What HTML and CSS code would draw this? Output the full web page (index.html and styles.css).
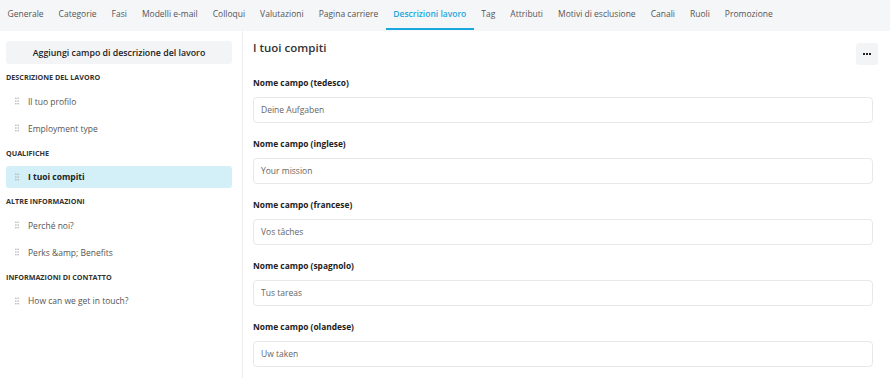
FILE: index.html
```html
<!DOCTYPE html>
<html lang="it">
<head>
<meta charset="utf-8">
<title>Descrizioni lavoro</title>
<link rel="stylesheet" href="styles.css">
</head>
<body>
<nav class="tabs">
  <a class="tab">Generale</a>
  <a class="tab">Categorie</a>
  <a class="tab">Fasi</a>
  <a class="tab">Modelli e-mail</a>
  <a class="tab">Colloqui</a>
  <a class="tab">Valutazioni</a>
  <a class="tab">Pagina carriere</a>
  <a class="tab active">Descrizioni lavoro</a>
  <a class="tab">Tag</a>
  <a class="tab">Attributi</a>
  <a class="tab">Motivi di esclusione</a>
  <a class="tab">Canali</a>
  <a class="tab">Ruoli</a>
  <a class="tab">Promozione</a>
</nav>
<div class="layout">
  <aside class="sidebar">
    <button class="add-btn">Aggiungi campo di descrizione del lavoro</button>
    <div class="group-title">DESCRIZIONE DEL LAVORO</div>
    <div class="item"><svg class="handle" viewBox="0 0 4 8" width="4" height="8"><circle cx="0.9" cy="1.2" r="0.75"/><circle cx="3.1" cy="1.2" r="0.75"/><circle cx="0.9" cy="4" r="0.75"/><circle cx="3.1" cy="4" r="0.75"/><circle cx="0.9" cy="6.8" r="0.75"/><circle cx="3.1" cy="6.8" r="0.75"/></svg>Il tuo profilo</div>
    <div class="item"><svg class="handle" viewBox="0 0 4 8" width="4" height="8"><circle cx="0.9" cy="1.2" r="0.75"/><circle cx="3.1" cy="1.2" r="0.75"/><circle cx="0.9" cy="4" r="0.75"/><circle cx="3.1" cy="4" r="0.75"/><circle cx="0.9" cy="6.8" r="0.75"/><circle cx="3.1" cy="6.8" r="0.75"/></svg>Employment type</div>
    <div class="group-title">QUALIFICHE</div>
    <div class="item selected"><svg class="handle" viewBox="0 0 4 8" width="4" height="8"><circle cx="0.9" cy="1.2" r="0.75"/><circle cx="3.1" cy="1.2" r="0.75"/><circle cx="0.9" cy="4" r="0.75"/><circle cx="3.1" cy="4" r="0.75"/><circle cx="0.9" cy="6.8" r="0.75"/><circle cx="3.1" cy="6.8" r="0.75"/></svg>I tuoi compiti</div>
    <div class="group-title">ALTRE INFORMAZIONI</div>
    <div class="item"><svg class="handle" viewBox="0 0 4 8" width="4" height="8"><circle cx="0.9" cy="1.2" r="0.75"/><circle cx="3.1" cy="1.2" r="0.75"/><circle cx="0.9" cy="4" r="0.75"/><circle cx="3.1" cy="4" r="0.75"/><circle cx="0.9" cy="6.8" r="0.75"/><circle cx="3.1" cy="6.8" r="0.75"/></svg>Perché noi?</div>
    <div class="item"><svg class="handle" viewBox="0 0 4 8" width="4" height="8"><circle cx="0.9" cy="1.2" r="0.75"/><circle cx="3.1" cy="1.2" r="0.75"/><circle cx="0.9" cy="4" r="0.75"/><circle cx="3.1" cy="4" r="0.75"/><circle cx="0.9" cy="6.8" r="0.75"/><circle cx="3.1" cy="6.8" r="0.75"/></svg>Perks &amp;amp; Benefits</div>
    <div class="group-title">INFORMAZIONI DI CONTATTO</div>
    <div class="item"><svg class="handle" viewBox="0 0 4 8" width="4" height="8"><circle cx="0.9" cy="1.2" r="0.75"/><circle cx="3.1" cy="1.2" r="0.75"/><circle cx="0.9" cy="4" r="0.75"/><circle cx="3.1" cy="4" r="0.75"/><circle cx="0.9" cy="6.8" r="0.75"/><circle cx="3.1" cy="6.8" r="0.75"/></svg>How can we get in touch?</div>
  </aside>
  <main class="main">
    <div class="head">
      <h1 class="title">I tuoi compiti</h1>
      <button class="more"><span></span><span></span><span></span></button>
    </div>
    <div class="field">
      <label class="label">Nome campo (tedesco)</label>
      <div class="input">Deine Aufgaben</div>
    </div>
    <div class="field">
      <label class="label">Nome campo (inglese)</label>
      <div class="input">Your mission</div>
    </div>
    <div class="field">
      <label class="label">Nome campo (francese)</label>
      <div class="input">Vos tâches</div>
    </div>
    <div class="field">
      <label class="label">Nome campo (spagnolo)</label>
      <div class="input">Tus tareas</div>
    </div>
    <div class="field">
      <label class="label">Nome campo (olandese)</label>
      <div class="input">Uw taken</div>
    </div>
  </main>
</div>
</body>
</html>
```

FILE: styles.css
```css
* { box-sizing: border-box; }
html, body { margin: 0; padding: 0; }
body {
  font-family: "Open Sans", "Noto Sans", sans-serif;
  color: #333;
  background: #fff;
  width: 890px;
  height: 378px;
  overflow: hidden;
}
.tabs {
  display: flex;
  align-items: flex-start;
  height: 31px;
  background: #f5f6f8;
}
.tab {
  display: block;
  height: 30px;
  padding: 0 7.5px;
  font-size: 8.5px;
  line-height: 28px;
  color: #555;
  border-bottom: 2px solid transparent;
  white-space: nowrap;
}
.tab.active {
  color: #1aa7de;
  font-weight: 600;
  border-bottom-color: #1aa7de;
}
.layout {
  display: flex;
  height: 347px;
}
.sidebar {
  width: 243px;
  flex: none;
  border-right: 1px solid #ededed;
  padding: 10px 10px 0 6px;
}
.add-btn {
  display: block;
  width: 226px;
  height: 23px;
  border: none;
  border-radius: 3px;
  background: #f3f4f6;
  font-family: inherit;
  font-size: 8.8px;
  font-weight: 600;
  color: #222;
  padding: 0;
  margin: 0 0 6px;
}
.group-title {
  font-size: 7.2px;
  font-weight: 700;
  color: #333;
  line-height: 14px;
  margin: 6.5px 0 6px;
}
.add-btn + .group-title { margin-top: 6px; }
.item {
  display: flex;
  align-items: center;
  height: 22px;
  margin: 5px 0;
  width: 226px;
  border-radius: 3px;
  padding-left: 9px;
  font-size: 8.5px;
  color: #555;
}
.item.selected {
  background: #d3eff8;
  color: #222;
  font-weight: 700;
}
.handle {
  flex: none;
  margin-right: 9px;
  fill: #a9a9a9;
}
.main {
  flex: 1;
  padding: 12px 12px 0 10px;
}
.head {
  display: flex;
  justify-content: space-between;
  align-items: flex-start;
  height: 22px;
}
.title {
  margin: -3px 0 0;
  font-size: 11.5px;
  line-height: 16px;
  font-weight: 600;
  color: #333;
}
.more {
  width: 22px;
  height: 22px;
  border: none;
  border-radius: 3px;
  background: #f3f4f6;
  display: flex;
  align-items: center;
  justify-content: center;
  gap: 1px;
  padding: 0;
}
.more span {
  width: 2px;
  height: 2px;
  background: #222;
}
.field {
  display: flex;
  flex-direction: column;
  margin-right: 5px;
}
.head + .field { margin-top: 11px; }
.label {
  font-size: 8.4px;
  font-weight: 700;
  color: #222;
  line-height: 14px;
  margin-bottom: 7px;
}
.input {
  height: 26px;
  border: 1px solid #e8e8e8;
  border-radius: 4px;
  padding: 0 7px;
  line-height: 24px;
  font-size: 8.5px;
  color: #666;
  margin-bottom: 14px;
}
```
